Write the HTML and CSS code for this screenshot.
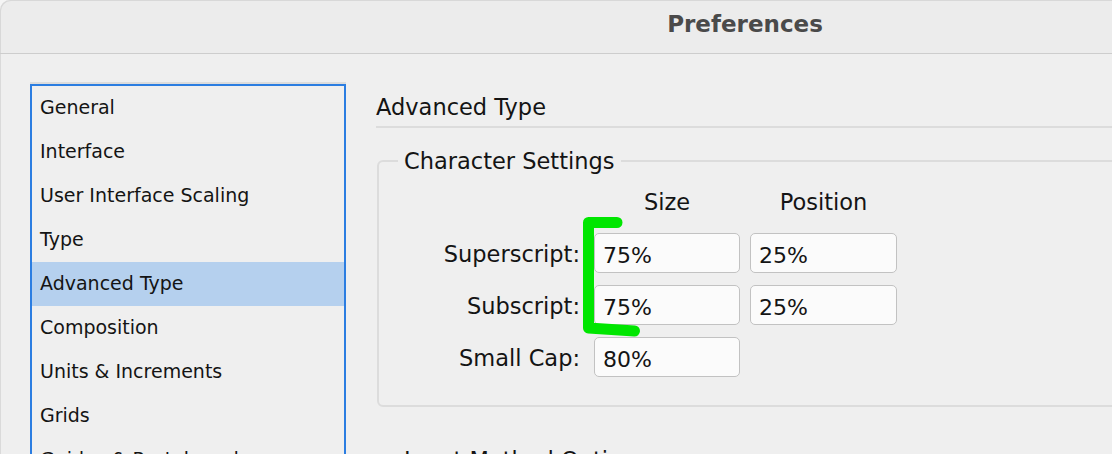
FILE: index.html
```html
<!DOCTYPE html>
<html lang="en">
<head>
<meta charset="utf-8">
<title>Preferences</title>
<link rel="stylesheet" href="styles.css">
</head>
<body>
<div class="window">
  <header class="titlebar"><span class="title">Preferences</span></header>
  <div class="main">
    <nav class="sidebar">
      <ul class="list">
        <li class="item">General</li>
        <li class="item">Interface</li>
        <li class="item">User Interface Scaling</li>
        <li class="item">Type</li>
        <li class="item sel">Advanced Type</li>
        <li class="item">Composition</li>
        <li class="item">Units &amp; Increments</li>
        <li class="item">Grids</li>
        <li class="item">Guides &amp; Pasteboard</li>
      </ul>
    </nav>
    <section class="pane">
      <h2 class="pane-title">Advanced Type</h2>
      <fieldset class="group">
        <legend>Character Settings</legend>
        <div class="grid">
          <span></span>
          <span class="col-head">Size</span>
          <span class="col-head">Position</span>
          <label class="lbl">Superscript:</label>
          <input class="field" type="text" value="75%">
          <input class="field" type="text" value="25%">
          <label class="lbl">Subscript:</label>
          <input class="field" type="text" value="75%">
          <input class="field" type="text" value="25%">
          <label class="lbl">Small Cap:</label>
          <input class="field" type="text" value="80%">
          <span></span>
        </div>
      </fieldset>
      <fieldset class="group group-next">
        <legend>Input Method Options</legend>
        <div class="spacer"></div>
      </fieldset>
    </section>
  </div>
  <svg class="mark" width="1112" height="454" viewBox="0 0 1112 454">
    <path d="M617 222.5 L588.5 222.5 L588.5 328 L634.5 331" fill="none" stroke="#00e600" stroke-width="11" stroke-linecap="round" stroke-linejoin="round"/>
  </svg>
</div>
</body>
</html>
```
FILE: styles.css
```css
html, body {
  margin: 0;
  height: 100%;
  overflow: hidden;
  background: #f5f5f5;
}
body {
  font-family: "DejaVu Sans", "Noto Sans", sans-serif;
  color: #141414;
}
.window {
  position: relative;
  width: 1490px;
  height: 454px;
  background: #efefef;
  border-top-left-radius: 10px;
  overflow: hidden;
  box-shadow: inset 1px 1px 0 #dadada;
}
.titlebar {
  height: 48px;
  padding-bottom: 5px;
  border-bottom: 1px solid #cdcdcd;
  background: #ececec;
  display: flex;
  align-items: center;
  justify-content: center;
  border-top-left-radius: 10px;
  box-shadow: inset 1px 1px 0 #d8d8d8;
}
.title {
  font-weight: bold;
  font-size: 23px;
  color: #4a4a4a;
}
.main {
  display: flex;
  gap: 30px;
  padding: 30px 0 0 30px;
}
.sidebar {
  flex: none;
}
.list {
  list-style: none;
  margin: 0;
  padding: 0;
  width: 312px;
  height: 400px;
  overflow: hidden;
  border: 2px solid #2b7de1;
  box-shadow: 0 -2px 0 0 #dcdcdc;
}
.item {
  height: 44px;
  line-height: 42px;
  padding-left: 8px;
  box-sizing: border-box;
  font-size: 19px;
  white-space: nowrap;
}
.item.sel {
  background: #b5d0ee;
}
.pane {
  flex: 1;
  padding-top: 9px;
}
.pane-title {
  margin: 0;
  font-size: 22.5px;
  font-weight: normal;
  line-height: 28px;
  padding-bottom: 5px;
  border-bottom: 2px solid #dcdcdc;
}
.group {
  margin: 19px 0 0 1px;
  border: 2px solid #dcdcdc;
  border-radius: 6px;
  padding: 12px 0 28px 0;
}
.group legend {
  margin-left: 19px;
  padding: 0 6px;
  font-size: 22.5px;
  line-height: 28px;
}
.group-next {
  margin-top: 39px;
}
.spacer {
  height: 60px;
}
.grid {
  display: grid;
  grid-template-columns: 205px 146px 147px;
  grid-template-rows: 34px repeat(3, 40px);
  column-gap: 10px;
  row-gap: 12px;
}
.col-head {
  align-self: start;
  text-align: center;
  font-size: 22.5px;
  line-height: 30px;
}
.lbl {
  align-self: center;
  text-align: right;
  padding-right: 4px;
  font-size: 22.5px;
  line-height: 28px;
  padding-top: 2px;
}
.field {
  box-sizing: border-box;
  width: 100%;
  height: 40px;
  margin: 0;
  padding: 4px 0 0 8px;
  border: 1.5px solid #c2c2c2;
  border-radius: 5px;
  background: #fbfbfb;
  font-family: "DejaVu Sans", "Noto Sans", sans-serif;
  font-size: 22px;
  color: #141414;
  outline: none;
}
.mark {
  position: absolute;
  left: 0;
  top: 0;
  pointer-events: none;
}
```
